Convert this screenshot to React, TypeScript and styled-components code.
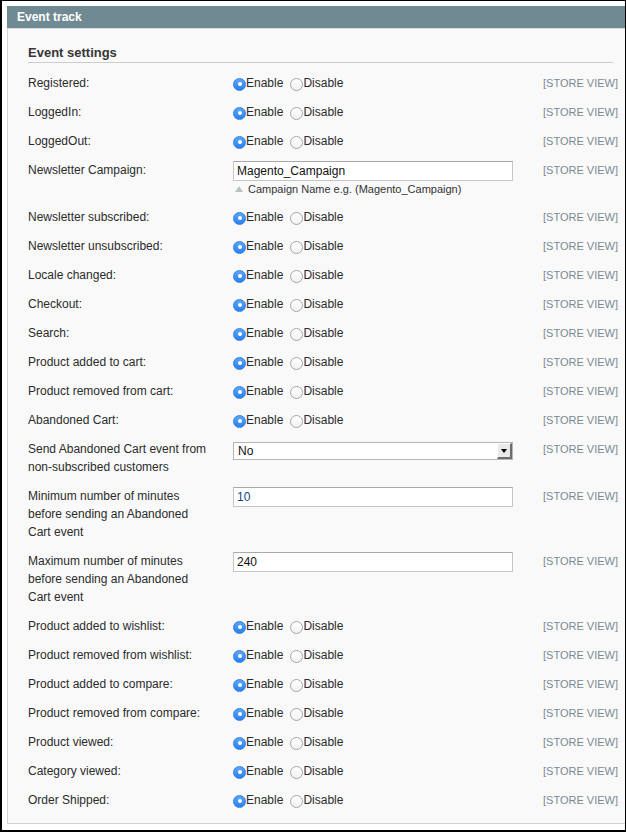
import styled, { createGlobalStyle } from "styled-components";

const GlobalStyle = createGlobalStyle`
  html, body {
    margin: 0;
    padding: 0;
    background: #fff;
  }
  body {
    font-family: "Liberation Sans", Arial, Helvetica, sans-serif;
  }
`;

const Frame = styled.div`
  width: 626px;
  height: 832px;
  box-sizing: border-box;
  border-top: 1px solid #000;
  border-left: 2px solid #000;
  border-right: 1px solid #000;
  border-bottom: 2px solid #000;
  padding: 5px 0 0 5px;
  background: #fff;
  overflow: hidden;
`;

const Panel = styled.div`
  width: 626px;
`;

const Header = styled.div`
  height: 22px;
  line-height: 22px;
  padding-left: 10px;
  background: #6f8a93;
  border-bottom: 1px solid #d9d9d9;
  color: #fff;
  font-size: 12px;
  font-weight: bold;
`;

const Body = styled.div`
  background: #f9f9f9;
  border-left: 1px solid #d3d3d3;
  border-bottom: 1px solid #d3d3d3;
  padding: 16px 20px 8px 20px;
`;

const Legend = styled.div`
  font-size: 13px;
  line-height: 15px;
  font-weight: bold;
  color: #363636;
  padding-bottom: 2px;
  border-bottom: 1px solid #cccccc;
`;

const Rows = styled.div`
  margin-top: 6px;
`;

const Row = styled.div`
  display: grid;
  grid-template-columns: 205px 310px 69px;
  padding: 5px 0 6px;
  font-size: 12px;
  line-height: 18px;
  color: #2b2b2b;
`;

const Label = styled.div`
  padding-right: 22px;
`;

const Value = styled.div`
  display: flex;
  flex-direction: column;
  align-items: flex-start;
`;

const Scope = styled.div`
  font-size: 11px;
  line-height: 18px;
  color: #7b8993;
  white-space: nowrap;
`;

const RadioGroup = styled.div`
  display: flex;
  align-items: center;
  height: 18px;
`;

const Option = styled.span<{ $first?: boolean }>`
  display: inline-flex;
  align-items: center;
  margin-left: ${(p) => (p.$first ? "0" : "7px")};
`;

const RadioDot = styled.span<{ $checked?: boolean }>`
  position: relative;
  display: inline-block;
  box-sizing: border-box;
  width: 13px;
  height: 13px;
  margin-top: 2px;
  border-radius: 50%;
  border: 1px solid ${(p) => (p.$checked ? "#2f7fe6" : "#a6a6a6")};
  background: ${(p) =>
    p.$checked
      ? "linear-gradient(#5aa6fb, #2a80ee)"
      : "linear-gradient(#ffffff, #f1f1f1)"};

  &::after {
    content: "";
    display: ${(p) => (p.$checked ? "block" : "none")};
    position: absolute;
    left: 50%;
    top: 50%;
    width: 4px;
    height: 4px;
    margin: -2px 0 0 -2px;
    border-radius: 50%;
    background: #fff;
  }
`;

const TextInput = styled.div<{ $color?: string }>`
  box-sizing: border-box;
  width: 280px;
  height: 20px;
  padding: 0 3px;
  background: #fff;
  border: 1px solid #c6c6c6;
  border-top-color: #a9a9a9;
  font-size: 12px;
  line-height: 18px;
  color: ${(p) => p.$color || "#111"};
`;

const Hint = styled.div`
  display: flex;
  align-items: center;
  gap: 5px;
  font-size: 11px;
  line-height: 16px;
  color: #333;
  padding-left: 2px;
`;

const HintArrow = styled.span`
  width: 0;
  height: 0;
  border-left: 4px solid transparent;
  border-right: 4px solid transparent;
  border-bottom: 6px solid #b8c2c6;
`;

const Select = styled.div`
  box-sizing: border-box;
  display: flex;
  align-items: center;
  justify-content: space-between;
  width: 280px;
  height: 18px;
  margin-top: 2px;
  padding-left: 4px;
  background: #fff;
  border: 1px solid #b5b5b5;
  font-size: 12px;
  color: #111;
`;

const SelectButton = styled.span`
  box-sizing: border-box;
  display: flex;
  align-items: center;
  justify-content: center;
  width: 15px;
  height: 16px;
  background: #e9e9e9;
  border-top: 1px solid #fff;
  border-left: 1px solid #fff;
  border-right: 2px solid #6d6d6d;
  border-bottom: 2px solid #6d6d6d;

  &::after {
    content: "";
    width: 0;
    height: 0;
    border-left: 3px solid transparent;
    border-right: 3px solid transparent;
    border-top: 4px solid #000;
  }
`;

function Radios() {
  return (
    <RadioGroup>
      <Option $first>
        <RadioDot $checked />
        Enable
      </Option>
      <Option>
        <RadioDot />
        Disable
      </Option>
    </RadioGroup>
  );
}

function Field({ label, children }: { label: string; children: React.ReactNode }) {
  return (
    <Row>
      <Label>{label}</Label>
      <Value>{children}</Value>
      <Scope>[STORE VIEW]</Scope>
    </Row>
  );
}

const firstToggles = ["Registered:", "LoggedIn:", "LoggedOut:"];
const midToggles = [
  "Newsletter subscribed:",
  "Newsletter unsubscribed:",
  "Locale changed:",
  "Checkout:",
  "Search:",
  "Product added to cart:",
  "Product removed from cart:",
  "Abandoned Cart:",
];
const lastToggles = [
  "Product added to wishlist:",
  "Product removed from wishlist:",
  "Product added to compare:",
  "Product removed from compare:",
  "Product viewed:",
  "Category viewed:",
  "Order Shipped:",
];

export default function App() {
  return (
    <>
      <GlobalStyle />
      <Frame>
        <Panel>
          <Header>Event track</Header>
          <Body>
            <Legend>Event settings</Legend>
            <Rows>
              {firstToggles.map((l) => (
                <Field key={l} label={l}>
                  <Radios />
                </Field>
              ))}
              <Field label="Newsletter Campaign:">
                <TextInput>Magento_Campaign</TextInput>
                <Hint>
                  <HintArrow />
                  Campaign Name e.g. (Magento_Campaign)
                </Hint>
              </Field>
              {midToggles.map((l) => (
                <Field key={l} label={l}>
                  <Radios />
                </Field>
              ))}
              <Field label="Send Abandoned Cart event from non-subscribed customers">
                <Select>
                  No
                  <SelectButton />
                </Select>
              </Field>
              <Field label="Minimum number of minutes before sending an Abandoned Cart event">
                <TextInput $color="#15428b">10</TextInput>
              </Field>
              <Field label="Maximum number of minutes before sending an Abandoned Cart event">
                <TextInput>240</TextInput>
              </Field>
              {lastToggles.map((l) => (
                <Field key={l} label={l}>
                  <Radios />
                </Field>
              ))}
            </Rows>
          </Body>
        </Panel>
      </Frame>
    </>
  );
}
